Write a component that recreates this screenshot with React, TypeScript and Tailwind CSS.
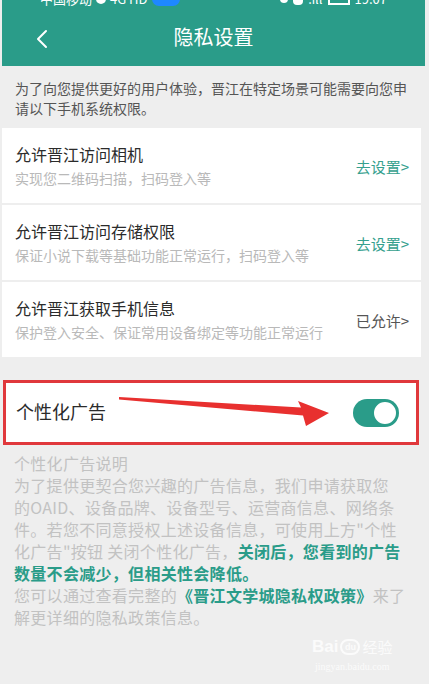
import React from "react";

const FONT = { fontFamily: '"Noto Sans CJK SC", "Noto Sans", sans-serif' };

function Row({ title, sub, action, teal }: { title: string; sub: string; action: string; teal: boolean }) {
  return (
    <div className="flex items-center bg-white h-[75px] pl-[13px] pr-[12px]">
      <div className="flex-1 flex flex-col">
        <div className="text-[16px] leading-[22px] text-[#2b2b2b]">{title}</div>
        <div className="text-[14px] leading-[20px] text-[#b9b9b9] mt-[3px]">{sub}</div>
      </div>
      <div className={`text-[15px] leading-[20px] mt-[2px] ${teal ? "text-[#35a08e]" : "text-[#555555]"}`}>{action}</div>
    </div>
  );
}

export default function App() {
  return (
    <div className="relative w-[429px] h-[684px] overflow-hidden bg-[#eeeeee]" style={FONT}>
      <div className="ml-[2px] w-[423px] bg-[#2a9c89] h-[66px] flex flex-col">
        <div className="h-[10px] overflow-hidden">
          <div className="flex items-center justify-between -mt-[9px] px-[38px] text-white text-[13px] leading-[16px]">
            <div className="flex items-center gap-[4px]">
              <span>中国移动</span>
              <span className="inline-block w-[10px] h-[10px] rounded-full bg-white" />
              <span>4G HD</span>
              <span className="inline-block w-[28px] h-[14px] rounded-full bg-[#1e88ff]" />
            </div>
            <div className="flex items-center gap-[5px]">
              <span className="inline-block w-[8px] h-[8px] rounded-full bg-white" />
              <span className="inline-block w-[10px] h-[12px] rounded-sm bg-white" />
              <span>.ıll</span>
              <span className="inline-block w-[22px] h-[12px] border-2 border-white" />
              <span>19:07</span>
            </div>
          </div>
        </div>
        <div className="relative flex-1 flex items-center justify-center">
          <svg className="absolute left-[33px] top-[19px]" width="14" height="20" viewBox="0 0 14 20">
            <path d="M11 2 L3 10 L11 18" fill="none" stroke="white" strokeWidth="2" strokeLinecap="round" strokeLinejoin="round" />
          </svg>
          <div className="text-white text-[20px] leading-[28px] -mt-[2px]">隐私设置</div>
        </div>
      </div>

      <div className="ml-[2px] w-[419px]">
        <div className="pl-[13px] pr-[8px] pt-[12px] pb-[10px] text-[14px] leading-[20px] text-[#555555]">
          为了向您提供更好的用户体验，晋江在特定场景可能需要向您申
          <br />
          请以下手机系统权限。
        </div>
        <div className="flex flex-col gap-[2px]">
          <Row title="允许晋江访问相机" sub="实现您二维码扫描，扫码登入等" action="去设置>" teal />
          <Row title="允许晋江访问存储权限" sub="保证小说下载等基础功能正常运行，扫码登入等" action="去设置>" teal />
          <Row title="允许晋江获取手机信息" sub="保护登入安全、保证常用设备绑定等功能正常运行" action="已允许>" teal={false} />
        </div>
      </div>

      <div className="ml-[3px] w-[416px] mt-[23px] h-[65px] border-[3px] border-[#e0383c] bg-white flex items-center pl-[10px] pr-[17px]">
        <div className="flex-1 text-[18px] leading-[24px] text-[#2b2b2b] -mt-[4px]">个性化广告</div>
        <div className="w-[46px] h-[28px] rounded-full bg-[#2a9c89] flex items-center justify-end pr-[1px]">
          <div className="w-[26px] h-[26px] rounded-full bg-white border-[2px] border-[#2a9c89]" />
        </div>
      </div>

      <div className="pl-[14px] pt-[7px] text-[16px] leading-[22px] tracking-[0.3px] text-[#c2c2c2]">
        个性化广告说明
        <br />
        为了提供更契合您兴趣的广告信息，我们申请获取您
        <br />
        的OAID、设备品牌、设备型号、运营商信息、网络条
        <br />
        件。若您不同意授权上述设备信息，可使用上方"个性
        <br />
        化广告"按钮 关闭个性化广告，<span className="text-[#2a9c89] font-bold">关闭后，您看到的广告</span>
        <br />
        <span className="text-[#2a9c89] font-bold">数量不会减少，但相关性会降低。</span>
        <br />
        您可以通过查看完整的<span className="text-[#2a9c89] font-bold">《晋江文学城隐私权政策》</span>来了
        <br />
        解更详细的隐私政策信息。
      </div>

      <svg className="absolute left-0 top-0 pointer-events-none" width="429" height="684" viewBox="0 0 429 684">
        <polygon points="119,397 301,407.5 298,401 329,413 306,426 303,415.5 119,399.5" fill="#e8302f" />
      </svg>

      <div className="absolute left-[312px] top-[637px] flex flex-col items-center text-[#fbfbfb]">
        <div className="flex items-center text-[17px] leading-[20px] font-bold" style={{ fontFamily: '"Liberation Sans", sans-serif' }}>
          <span>Bai</span>
          <span className="inline-block w-[20px] h-[16px] rounded-full border-2 border-[#fbfbfb] mx-[2px] text-[9px] leading-[12px] text-center">du</span>
          <span className="font-normal text-[15px]" style={FONT}>经验</span>
        </div>
        <div className="text-[10px] leading-[12px] mt-[4px]" style={{ fontFamily: '"Liberation Serif", serif' }}>jingyan.baidu.com</div>
      </div>
    </div>
  );
}
